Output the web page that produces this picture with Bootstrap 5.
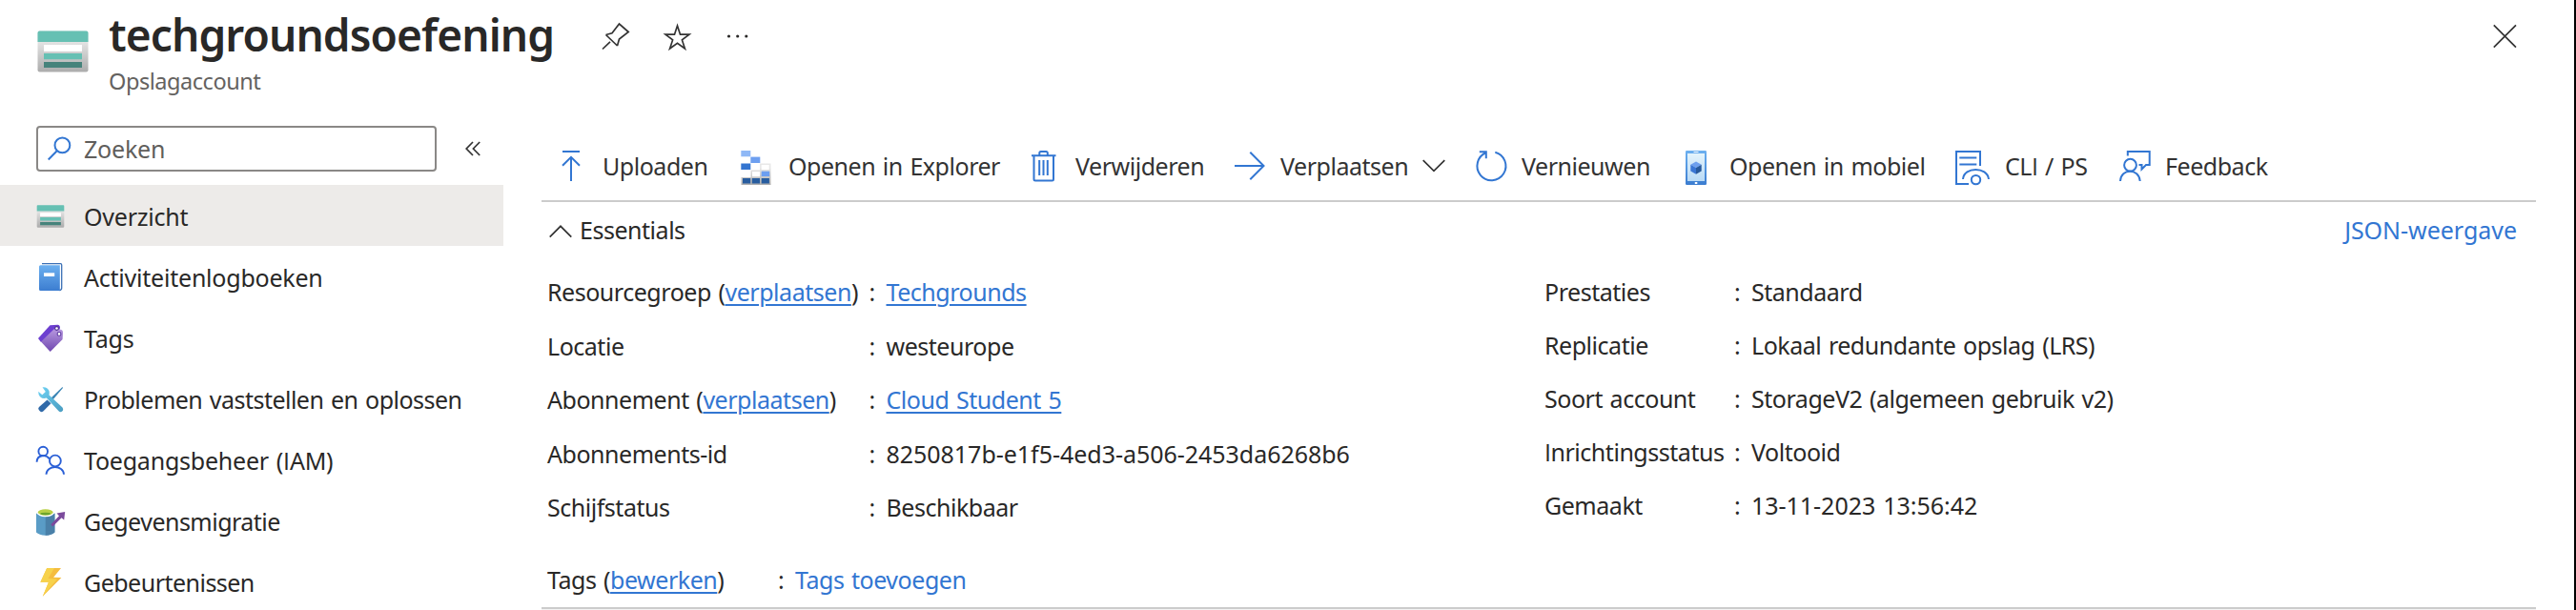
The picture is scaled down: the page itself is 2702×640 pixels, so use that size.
<!DOCTYPE html>
<html lang="nl">
<head>
<meta charset="utf-8">
<meta name="viewport" content="width=device-width, initial-scale=1">
<title>techgroundsoefening</title>
<link href="https://cdn.jsdelivr.net/npm/bootstrap@5.3.0/dist/css/bootstrap.min.css" rel="stylesheet">
<style>
:root{--ink:#292827;--az:#3276d2}
body{font-family:"Noto Sans","Open Sans",sans-serif;font-size:25px;line-height:32px;letter-spacing:-.47px;word-spacing:1.6px;color:var(--ink);background:#fff;overflow:hidden}
.blade{width:2702px;height:640px;border-right:2px solid #000}
.blade svg{display:block;flex:none;overflow:visible}
.ln{fill:none;stroke:var(--az);stroke-width:2}
.dk{fill:none;stroke:#333;stroke-width:1.7}
.blade-head{height:132px;padding:0 60px 0 39px}
.res-icon{margin:32px 21px 0 0}
.title{font-size:46px;line-height:60px;font-weight:600;letter-spacing:-.9px;margin:6px 0 4px}
.subtitle{font-size:23.5px;line-height:30px;letter-spacing:-.45px;color:#646260}
.title-tools{margin:22px 0 0 50px;gap:36px}
.close-x{margin-top:25px}
.ci{font-family:"Open Sans",sans-serif}
.side{width:528px}
.search{width:420px;height:48px;margin-left:38px;border:2px solid #8a8886;border-radius:4px;color:#605e5c;padding-left:10px;gap:12px;letter-spacing:-.2px}
.search span{margin-top:-1px}
.collapse-btn{margin-left:30px}
.side-list{margin-top:14px;letter-spacing:-.22px}
.side-item{height:64px;padding-left:38px;gap:20px;white-space:nowrap}
.side-item.on{background:#edebe9}
.side-item span.lbl{padding-top:2px}
.tight{letter-spacing:-.52px}
.main{width:2092px;margin-left:40px}
.tools{display:grid;grid-template-columns:42px 145px 50px 255px 46px 167px 48px 205px 48px 172px 46px 237px 52px 120px 48px auto;height:80px;padding:6px 0 0 22px;border-bottom:2px solid #ccc;white-space:nowrap;align-items:center;color:#333}
.ess{height:58px;padding:0 20px 0 8px}
.fact{display:grid;align-items:center;white-space:nowrap}
.facts-l .fact{grid-template-columns:337.5px 18px auto;height:56.6px}
.facts-r .fact{grid-template-columns:199px 18px auto;height:56px}
.facts-l{width:1052px;padding:7.7px 0 0 6px}
.facts-r{padding-top:8px}
.tagrow{grid-template-columns:242px 18px auto;height:58px;padding-left:6px;margin-top:18px}
.digits{letter-spacing:-.03px}
.rule{height:3px;background:#f3f3f3;border-top:2px solid #ccc}
a{color:var(--az)}
a.u{text-decoration:underline;text-decoration-thickness:2px;text-underline-offset:3px}
</style>
<script src="https://cdn.jsdelivr.net/npm/bootstrap@5.3.0/dist/js/bootstrap.bundle.min.js"></script>
</head>
<body>
<svg width="0" height="0" class="position-absolute" aria-hidden="true">
  <defs>
    <linearGradient id="gGrey" x2="0" y2="1"><stop offset="0.2" stop-color="#e8e8e8"/><stop offset="1" stop-color="#acacac"/></linearGradient>
    <linearGradient id="gBlue" x2="0" y2="1"><stop stop-color="#6cb0f0"/><stop offset="1" stop-color="#3c7dd0"/></linearGradient>
    <linearGradient id="gPurple" x2="0" y2="1"><stop stop-color="#b99ae0"/><stop offset="1" stop-color="#7048b0"/></linearGradient>
    <linearGradient id="gWrench" x2="1" y2="1"><stop stop-color="#6fd3f5"/><stop offset="1" stop-color="#4a9cc0"/></linearGradient>
    <linearGradient id="gScreen" x2="0" y2="1"><stop stop-color="#e4f4fc"/><stop offset="1" stop-color="#b8daf6"/></linearGradient>
    <symbol id="storage" viewBox="0 0 54 44">
      <rect x=".5" y=".5" width="53" height="43" rx="2" fill="url(#gGrey)"/>
      <path d="M.5 12V2.5a2 2 0 0 1 2-2h49a2 2 0 0 1 2 2V12z" fill="#66c0b3"/>
      <path d="M7 15h40v7H7z" fill="#fff"/><path d="M7 24h40v6.300H7z" fill="#66c0b3"/><path d="M7 33h40v6H7z" fill="#46837b"/>
    </symbol>
  </defs>
</svg>
<div class="blade overflow-hidden">
  <header class="blade-head d-flex align-items-start">
    <svg class="res-icon" width="54" height="44"><use href="#storage"/></svg>
    <div><h1 class="title">techgroundsoefening</h1><div class="subtitle">Opslagaccount</div></div>
    <div class="title-tools d-flex">
      <svg width="30" height="32" viewBox="0 0 30 32"><path class="dk" d="M1 29.500 9 21.800M4.500 14.500 16.500 26M4.500 14.500 11 12.800 18.500 3 28.200 11.500 18.500 19 16.500 26"/></svg>
      <svg width="28" height="32" viewBox="0 0 28 32"><path class="dk" d="M13.500 5 16.500 14.200H26L18.400 19.900 21.400 29 13.500 23.300 5.600 29 8.600 19.900 1 14.200H10.500Z"/></svg>
      <svg width="26" height="32" viewBox="0 0 26 32" fill="#292827"><circle cx="3.500" cy="16" r="1.600"/><circle cx="12.700" cy="16" r="1.600"/><circle cx="21.800" cy="16" r="1.600"/></svg>
    </div>
    <svg class="close-x ms-auto" width="25" height="26" viewBox="0 0 25 26"><path class="dk" d="M.8 1.300 24 24.700M24 1.300 .8 24.700"/></svg>
  </header>
  <div class="d-flex">
    <aside class="side">
      <div class="d-flex align-items-center">
        <div class="search d-flex align-items-center">
          <svg width="26" height="26" viewBox="0 0 26 26"><path class="ln" d="M.7 24.500 9.800 15.300"/><circle class="ln" cx="15.400" cy="9.400" r="7.900"/></svg>
          <span>Zoeken</span>
        </div>
        <svg class="collapse-btn" width="16" height="16" viewBox="0 0 16 16"><path class="dk" d="M8 1 1.200 8 8 15M15.200 1 8.400 8 15.200 15"/></svg>
      </div>
      <nav class="side-list">
        <div class="side-item d-flex align-items-center on">
          <svg width="30" height="32" viewBox="0 0 30 32"><use href="#storage" x=".3" y="5" width="29.400" height="24"/></svg><span class="lbl">Overzicht</span></div>
        <div class="side-item d-flex align-items-center">
          <svg width="30" height="32" viewBox="0 0 30 32"><path d="M6 2.700H25.500a1.200 1.200 0 0 1 1.200 1.200V28a2.500 2.500 0 0 1-2.500 2.500" fill="#fff" stroke="#3a6fb5" stroke-width="1.300"/><path d="M3 5.500a2 2 0 0 1 2-1.200H24.800V31H4.500A1.500 1.500 0 0 1 3 29.500z" fill="url(#gBlue)"/><path d="M8 12.300h11.200v3.700H8z" fill="#fff"/></svg><span class="lbl">Activiteitenlogboeken</span></div>
        <div class="side-item d-flex align-items-center">
          <svg width="30" height="32" viewBox="0 0 30 32"><path d="M2 17 14.500 3.300 22.500 2.800Q25 3 25 6L24 9 5 21z" fill="#6d3fd0"/><path d="M5 20.500 19.500 6.500 26.500 8Q28 8.500 28 10.500L27.600 18 14.700 31z" fill="url(#gPurple)"/><circle cx="21.500" cy="6.500" r="1.900" fill="#fff" stroke="#4b2b90" stroke-width="1.100"/><circle cx="24" cy="12.400" r="1.900" fill="#fff" stroke="#5d3aa0" stroke-width="1.100"/></svg><span class="lbl">Tags</span></div>
        <div class="side-item d-flex align-items-center">
          <svg width="30" height="32" viewBox="0 0 30 32"><path d="M27.500 4 28 5 17 18 15 16z" fill="#3b86b5"/><path d="M11.500 17.500 15.500 21.300 7.300 29.600Q5.500 31 4 29.500L2.700 28Q1.500 26.500 3 25z" fill="#2f69a8"/><path d="M6.500 4.300Q11.500 3.500 13.500 8 14.200 10.500 13.500 12.500L27.500 25.500Q29 28 27.200 29.500 25.500 31 23.500 29.300L10.800 15.600Q7 17 4 14.200 2 12 2.200 8.800L6.300 12.200 9.800 9z" fill="url(#gWrench)"/></svg><span class="lbl tight">Problemen vaststellen en oplossen</span></div>
        <div class="side-item d-flex align-items-center">
          <svg width="30" height="32" viewBox="0 0 30 32" fill="none" stroke="#2a5fd6" stroke-width="1.900"><circle cx="7.200" cy="7.500" r="4.800"/><path d="M.6 18.700C.8 11 10.500 10.300 13.800 15.400M10.500 31.700C11 21.500 28.500 21.500 29 31.700"/><circle cx="19.900" cy="17.500" r="5.900"/></svg><span class="lbl">Toegangsbeheer (<span class="ci">I</span>AM)</span></div>
        <div class="side-item d-flex align-items-center">
          <svg width="30" height="32" viewBox="0 0 30 32"><path d="M0 8.500V28.500Q3 31.500 9.700 31.700 16.500 31.500 19.400 28.500V8.500Q9.700 15 0 8.500z" fill="#5a9cc6"/><path d="M9.700 12V31.700Q16.500 31.500 19.400 28.500V8.500Q16 12 9.700 12z" fill="#4a80a8"/><ellipse cx="9.700" cy="7.800" rx="8.900" ry="4.400" fill="#fff"/><ellipse cx="9.700" cy="7.400" rx="7.900" ry="3.200" fill="#b9d045"/><ellipse cx="9.700" cy="9.100" rx="5.400" ry="1.400" fill="#6ea52c"/><path d="M15.300 20.300 24 11.300 21.500 8.400 30.200 7 29.200 15.500 26.500 13.200 17.300 22.500z" fill="#7b4a9c"/></svg><span class="lbl tight">Gegevensmigratie</span></div>
        <div class="side-item d-flex align-items-center">
          <svg width="30" height="32" viewBox="0 0 30 32"><path d="M11.200 2H26L18.100 11.700 26.400 12 6.800 31.700 13 16.700H4.400z" fill="#f5bd40"/><path d="M11.200 2H19L12.500 13 22 13.500 6.800 31.700 13 16.700H4.400z" fill="#f7d24c"/></svg><span class="lbl tight">Gebeurtenissen</span></div>
      </nav>
    </aside>
    <main class="main">
      <div class="tools">
        <svg width="20" height="40" viewBox="0 0 20 40"><path class="ln" d="M0 5H18M9 36V11M0 19.800 9 10.800 18 19.800"/></svg><span>Uploaden</span>
        <svg width="32" height="40" viewBox="0 0 32 40"><path d="M20 17.500H31.500V40H.5V32H10.500V24.500H20z" fill="url(#gGrey)"/><path d="M.3 4h10v6.300H.3z" fill="#8fb8f6"/><path d="M10.300 10.600h10v6.400h-10z" fill="#6d9ff0"/><path d="M.3 17.500h10V24H.3z" fill="#3475d0"/><path d="M21.700 19h8v5h-8zM12 26h8v5.300h-8z" fill="#fff"/><path d="M21.700 25.700h8.500V31h-8.500z" fill="#6d9ff0"/><path d="M2 33h8.200v5.500H2zM11.800 33H20v5.500h-8.200zM21.700 33h8.200v5.500h-8.200z" fill="#285d9f"/></svg><span>Openen in Explorer</span>
        <svg width="26" height="40" viewBox="0 0 26 40"><path class="ln" d="M0 9.300H25.500M2.500 9.300V34a1.500 1.500 0 0 0 1.500 1.500H21.500a1.500 1.500 0 0 0 1.500-1.500V9.300M8.300 9V6.500A1.500 1.500 0 0 1 9.800 5H15.300a1.500 1.500 0 0 1 1.500 1.500V9M8.200 14V30M12.500 14V30M16.800 14V30"/></svg><span>Verwijderen</span>
        <svg width="32" height="40" viewBox="0 0 32 40"><path class="ln" d="M0 20H30.500M16.300 5.800 30.500 20 16.300 34.200"/></svg>
        <div class="d-flex align-items-center justify-content-between pe-4"><span>Verplaatsen</span><svg class="me-2" width="24" height="40" viewBox="0 0 24 40"><path class="dk" d="M.7 14.200 12 25.300 23.300 14.200"/></svg></div>
        <svg width="32" height="40" viewBox="0 0 32 40"><path class="ln" d="M20.300 5.700A15 15 0 1 1 10.800 6.300M3.800 5.200H10.800V12.300"/></svg><span>Vernieuwen</span>
        <svg width="23" height="40" viewBox="0 0 23 40"><rect y="4" width="22" height="36" rx="1.200" fill="url(#gBlue)"/><path d="M2 7h18v29H2z" fill="url(#gScreen)"/><path d="M8.500 5h5v1h-5zM9.800 37h2.500v2H9.800z" fill="#fff"/><path d="M11 15.500 16.700 18.700 11 22 5.300 18.700z" fill="#6ea0ee"/><path d="M5.300 18.700 11 22V28.700L5.300 25.400z" fill="#3a76d4"/><path d="M16.700 18.700 11 22V28.700L16.700 25.400z" fill="#27599c"/></svg><span>Openen in mobiel</span>
        <svg width="37" height="40" viewBox="0 0 37 40"><path class="ln" d="M26 20V5H1V39H14M4.300 11.500H22.300M4.300 18.500H22.300M8 34C9 20.500 33.500 20.500 35 34"/><circle class="ln" cx="21.500" cy="34.600" r="4.700"/></svg><span>CL<span class="ci">I</span> / PS</span>
        <svg width="33" height="40" viewBox="0 0 33 40"><circle class="ln" cx="11.500" cy="19.200" r="6.400"/><path class="ln" d="M1 36C1.500 22.300 20.800 22.300 21.700 36M8.800 9.500V5H31.700V19H28L23.500 23.500V19H20.500"/></svg><span>Feedback</span>
      </div>
      <div class="ess d-flex justify-content-between align-items-center">
        <div class="d-flex align-items-center gap-2"><svg class="mt-1" width="24" height="14" viewBox="0 0 24 14"><path class="dk" d="M.7 12.600 12 1.300 23.300 12.600"/></svg><span>Essentials</span></div>
        <a href="#" class="text-decoration-none digits">JSON-weergave</a>
      </div>
      <div class="d-flex">
        <div class="facts-l">
          <div class="fact"><div>Resourcegroep (<a href="#" class="u">verplaatsen</a>)</div><span>:</span><div><a href="#" class="u">Techgrounds</a></div></div>
          <div class="fact"><div>Locatie</div><span>:</span><div>westeurope</div></div>
          <div class="fact"><div>Abonnement (<a href="#" class="u">verplaatsen</a>)</div><span>:</span><div><a href="#" class="u">Cloud Student 5</a></div></div>
          <div class="fact"><div>Abonnements-id</div><span>:</span><div class="digits">8250817b-e1f5-4ed3-a506-2453da6268b6</div></div>
          <div class="fact"><div>Schijfstatus</div><span>:</span><div>Beschikbaar</div></div>
        </div>
        <div class="facts-r">
          <div class="fact"><div>Prestaties</div><span>:</span><div>Standaard</div></div>
          <div class="fact"><div>Replicatie</div><span>:</span><div>Lokaal redundante opslag (LRS)</div></div>
          <div class="fact"><div>Soort account</div><span>:</span><div>StorageV2 (algemeen gebruik v2)</div></div>
          <div class="fact"><div><span class="ci">I</span>nrichtingsstatus</div><span>:</span><div>Voltooid</div></div>
          <div class="fact"><div>Gemaakt</div><span>:</span><div class="digits">13-11-2023 13:56:42</div></div>
        </div>
      </div>
      <div class="fact tagrow"><div>Tags (<a href="#" class="u">bewerken</a>)</div><span>:</span><div><a href="#" class="text-decoration-none">Tags toevoegen</a></div></div>
      <div class="rule"></div>
    </main>
  </div>
</div>
</body>
</html>
